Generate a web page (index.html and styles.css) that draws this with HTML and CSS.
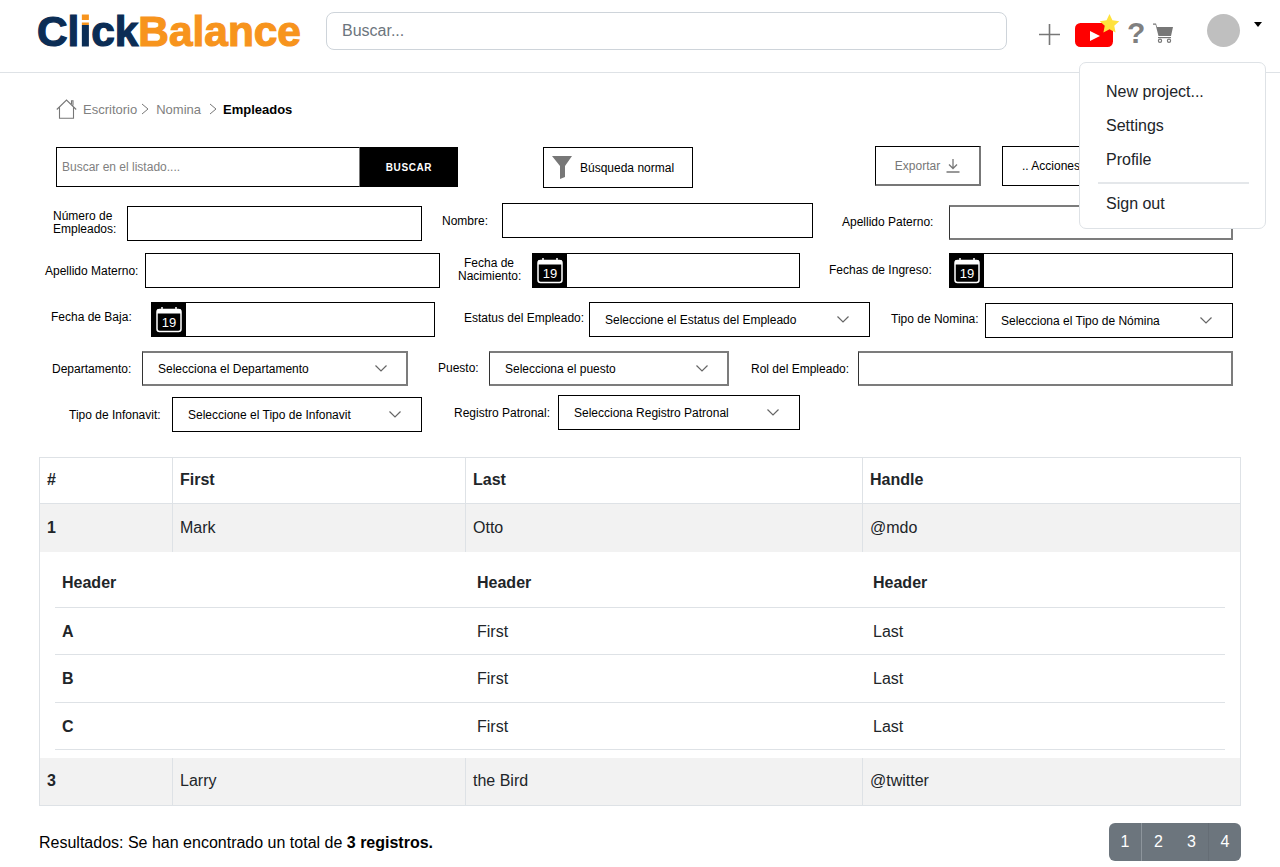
FILE: index.html
```html
<!doctype html>
<html>

<head>
	<title>ClickBalance - Empleados</title>
	<link rel="stylesheet" href="styles.css">
</head>

<body>
	<div class="top-bar">
		<div class="logo"><span class="logo-click">Cl</span><span class="logo-i">i</span><span class="logo-click">ck</span><span class="logo-balance">Balance</span></div>
		<div class="top-search">Buscar...</div>
		<div class="top-icons">
			<svg class="icon-plus" width="21" height="21" viewBox="0 0 21 21"><path d="M10.500 0v21M0 10.500h21" stroke="#777" stroke-width="1.600" fill="none"/></svg>
			<div class="yt-wrap">
				<svg width="38" height="24" viewBox="0 0 38 24"><rect width="38" height="24" rx="5.500" fill="#ff0000"/><path d="M15 8l10 5-10 5z" fill="#fff"/></svg>
				<svg class="yt-star" width="21" height="19" viewBox="0 0 22 20"><path d="M11 0l3.100 6.600 7.200.9-5.300 4.900 1.400 7.100L11 16l-6.400 3.500 1.400-7.100L.7 7.500l7.200-.9z" fill="#ffe23d"/></svg>
			</div>
			<span class="icon-help">?</span>
			<svg class="icon-cart" width="20" height="20" viewBox="0 0 20 20"><path d="M0 .5h3l1 3.500H20l-2 9H5.500L2.600 1.700H0z" fill="#777"/><rect x="5" y="14" width="13" height="1.200" fill="#777"/><circle cx="7" cy="17.800" r="1.600" fill="none" stroke="#777" stroke-width="1.200"/><circle cx="16" cy="17.800" r="1.600" fill="none" stroke="#777" stroke-width="1.200"/></svg>
			<div class="avatar"></div>
			<div class="caret"></div>
		</div>
		<div class="user-menu">
			<div class="user-menu-item">New project...</div>
			<div class="user-menu-item">Settings</div>
			<div class="user-menu-item">Profile</div>
			<div class="user-menu-line"></div>
			<div class="user-menu-item">Sign out</div>
		</div>
	</div>

	<div class="content">
		<div class="crumbs">
			<svg class="crumb-home" width="21" height="20" viewBox="0 0 21 20"><path d="M.8 10.500L10.500 1l9.700 9.500M3.500 8.500v10.800h14V8.500M15.500 5V1.800h1.500v4.700" fill="none" stroke="#777" stroke-width="1.100"/></svg>
			<span class="crumb">Escritorio</span>
			<svg class="crumb-sep" width="8" height="12" viewBox="0 0 8 12"><path d="M1 1l6 5-6 5" fill="none" stroke="#777" stroke-width="1"/></svg>
			<span class="crumb crumb-second">Nomina</span>
			<svg class="crumb-sep crumb-sep-wide" width="8" height="12" viewBox="0 0 8 12"><path d="M1 1l6 5-6 5" fill="none" stroke="#777" stroke-width="1"/></svg>
			<span class="crumb-current">Empleados</span>
		</div>

		<div class="toolbar">
			<div class="list-search">Buscar en el listado....</div>
			<div class="list-search-btn">BUSCAR</div>
			<div class="tool-box filter-box">
				<svg width="20" height="23" viewBox="0 0 20 23"><path d="M0 0h20l-7 10v11l-5 2V10z" fill="#777"/></svg>
				<span>Búsqueda normal</span>
			</div>
			<div class="tool-box export-box">
				<span>Exportar</span>
				<svg width="14" height="14" viewBox="0 0 14 14"><path d="M7 0v9M3 5.500L7 9.500l4-4M.5 13h13" fill="none" stroke="#777" stroke-width="1.300"/></svg>
			</div>
			<div class="tool-box actions-box">.. Acciones</div>
		</div>

		<div class="form-row row-1">
			<label class="lbl l-numero">Número de Empleados:</label>
			<div class="ctl c-numero"></div>
			<label class="lbl l-nombre">Nombre:</label>
			<div class="ctl c-nombre"></div>
			<label class="lbl l-paterno">Apellido Paterno:</label>
			<div class="ctl soft c-paterno"></div>
		</div>

		<div class="form-row row-2">
			<label class="lbl l-materno">Apellido Materno:</label>
			<div class="ctl c-materno"></div>
			<label class="lbl center l-nacimiento">Fecha de Nacimiento:</label>
			<div class="ctl date c-nacimiento">
				<div class="cal"><svg width="26" height="26" viewBox="0 0 26 26"><path d="M6 0v3M20 0v3" stroke="#fff" stroke-width="1.500"/><rect x="1" y="2.500" width="24" height="22" rx="2.500" fill="none" stroke="#fff" stroke-width="1.500"/><rect x="1" y="2.500" width="24" height="4" fill="#fff"/><text x="13" y="20" class="cal-num">19</text></svg></div>
			</div>
			<label class="lbl l-ingreso">Fechas de Ingreso:</label>
			<div class="ctl date c-ingreso">
				<div class="cal"><svg width="26" height="26" viewBox="0 0 26 26"><path d="M6 0v3M20 0v3" stroke="#fff" stroke-width="1.500"/><rect x="1" y="2.500" width="24" height="22" rx="2.500" fill="none" stroke="#fff" stroke-width="1.500"/><rect x="1" y="2.500" width="24" height="4" fill="#fff"/><text x="13" y="20" class="cal-num">19</text></svg></div>
			</div>
		</div>

		<div class="form-row row-3">
			<label class="lbl l-baja">Fecha de Baja:</label>
			<div class="ctl date c-baja">
				<div class="cal"><svg width="26" height="26" viewBox="0 0 26 26"><path d="M6 0v3M20 0v3" stroke="#fff" stroke-width="1.500"/><rect x="1" y="2.500" width="24" height="22" rx="2.500" fill="none" stroke="#fff" stroke-width="1.500"/><rect x="1" y="2.500" width="24" height="4" fill="#fff"/><text x="13" y="20" class="cal-num">19</text></svg></div>
			</div>
			<label class="lbl l-estatus">Estatus del Empleado:</label>
			<div class="ctl select c-estatus"><span>Seleccione el Estatus del Empleado</span><svg class="chev" width="12" height="7" viewBox="0 0 12 7"><path d="M.5.500L6 6l5.500-5.500" fill="none" stroke="#666" stroke-width="1.200"/></svg></div>
			<label class="lbl l-tipo-nomina">Tipo de Nomina:</label>
			<div class="ctl select c-tipo-nomina"><span>Selecciona el Tipo de Nómina</span><svg class="chev" width="12" height="7" viewBox="0 0 12 7"><path d="M.5.500L6 6l5.500-5.500" fill="none" stroke="#666" stroke-width="1.200"/></svg></div>
		</div>

		<div class="form-row row-4">
			<label class="lbl l-depto">Departamento:</label>
			<div class="ctl select soft c-depto"><span>Selecciona el Departamento</span><svg class="chev" width="12" height="7" viewBox="0 0 12 7"><path d="M.5.500L6 6l5.500-5.500" fill="none" stroke="#666" stroke-width="1.200"/></svg></div>
			<label class="lbl l-puesto">Puesto:</label>
			<div class="ctl select soft c-puesto"><span>Selecciona el puesto</span><svg class="chev" width="12" height="7" viewBox="0 0 12 7"><path d="M.5.500L6 6l5.500-5.500" fill="none" stroke="#666" stroke-width="1.200"/></svg></div>
			<label class="lbl l-rol">Rol del Empleado:</label>
			<div class="ctl soft c-rol"></div>
		</div>

		<div class="form-row row-5">
			<label class="lbl l-infonavit">Tipo de Infonavit:</label>
			<div class="ctl select c-infonavit"><span>Seleccione el Tipo de Infonavit</span><svg class="chev" width="12" height="7" viewBox="0 0 12 7"><path d="M.5.500L6 6l5.500-5.500" fill="none" stroke="#666" stroke-width="1.200"/></svg></div>
			<label class="lbl l-registro">Registro Patronal:</label>
			<div class="ctl select c-registro"><span>Selecciona Registro Patronal</span><svg class="chev" width="12" height="7" viewBox="0 0 12 7"><path d="M.5.500L6 6l5.500-5.500" fill="none" stroke="#666" stroke-width="1.200"/></svg></div>
		</div>

		<table class="main-table">
			<colgroup>
				<col class="col-num">
				<col class="col-first">
				<col class="col-last">
				<col>
			</colgroup>
			<tr class="head-row">
				<th>#</th>
				<th>First</th>
				<th>Last</th>
				<th>Handle</th>
			</tr>
			<tr class="grey-row">
				<th>1</th>
				<td>Mark</td>
				<td>Otto</td>
				<td>@mdo</td>
			</tr>
			<tr>
				<td colspan="4" class="nested-cell">
					<table class="nested-table">
						<colgroup>
							<col class="nested-a">
							<col class="nested-b">
							<col>
						</colgroup>
						<tr class="nested-head">
							<th>Header</th>
							<th>Header</th>
							<th>Header</th>
						</tr>
						<tr>
							<th>A</th>
							<td>First</td>
							<td>Last</td>
						</tr>
						<tr>
							<th>B</th>
							<td>First</td>
							<td>Last</td>
						</tr>
						<tr>
							<th>C</th>
							<td>First</td>
							<td>Last</td>
						</tr>
					</table>
				</td>
			</tr>
			<tr class="grey-row">
				<th>3</th>
				<td>Larry</td>
				<td>the Bird</td>
				<td>@twitter</td>
			</tr>
		</table>

		<div class="results">
			<div class="results-text">Resultados: Se han encontrado un total de <b>3 registros.</b></div>
			<div class="pager">
				<div class="page-num page-first">1</div>
				<div class="page-num">2</div>
				<div class="page-num">3</div>
				<div class="page-num page-last">4</div>
			</div>
		</div>
	</div>
</body>

</html>
```

FILE: styles.css
```css
html, body {
	margin: 0;
	padding: 0;
	height: 100%;
	overflow: hidden;
	background-color: #fff;
	color: #212529;
	font-family: 'Liberation Sans', Arial, sans-serif;
	font-size: 16px;
}

/* top bar */
.top-bar {
	position: relative;
	display: flex;
	align-items: flex-start;
	box-sizing: border-box;
	height: 73px;
	border-bottom: 1px solid #dee2e6;
}
.logo {
	margin: 9px 0 0 37px;
	width: 289px;
	height: 46px;
	font-size: 42.400px;
	line-height: 46px;
	font-weight: bold;
	white-space: nowrap;
	-webkit-text-stroke: 1.200px;
}
.logo-click {
	color: #0b2d55;
}
.logo-i {
	color: transparent;
	background: linear-gradient(#f7941d 0, #f7941d 36%, #0b2d55 36%);
	-webkit-background-clip: text;
	background-clip: text;
}
.logo-balance {
	color: #f7941d;
}
.top-search {
	box-sizing: border-box;
	margin-top: 12px;
	width: 681px;
	height: 38px;
	padding: 0 15px;
	border: 1px solid #ced4da;
	border-radius: 8px;
	line-height: 36px;
	color: #6c757d;
}
.top-icons {
	display: flex;
	align-items: flex-start;
	margin-left: 32px;
}
.icon-plus {
	margin-top: 24px;
}
.yt-wrap {
	position: relative;
	margin: 23px 0 0 15px;
	height: 24px;
}
.yt-star {
	position: absolute;
	top: -9px;
	left: 24px;
}
.icon-help {
	margin: 15px 0 0 14px;
	width: 20px;
	font-size: 30px;
	line-height: 36px;
	font-weight: bold;
	color: #808080;
}
.icon-cart {
	margin: 23px 0 0 6px;
}
.avatar {
	margin: 14px 0 0 34px;
	width: 33px;
	height: 33px;
	border-radius: 50%;
	background-color: #bfbfbf;
}
.caret {
	margin: 22px 0 0 14px;
	width: 0;
	height: 0;
	border-left: 4.500px solid transparent;
	border-right: 4.500px solid transparent;
	border-top: 5px solid #000;
}
.user-menu {
	position: absolute;
	z-index: 2;
	top: 62px;
	left: 1079px;
	box-sizing: border-box;
	width: 187px;
	height: 167px;
	padding: 12px 0;
	border: 1px solid #dee2e6;
	border-radius: 7px;
	background-color: #fff;
}
.user-menu-item {
	padding-left: 26px;
	height: 34px;
	line-height: 33px;
}
.user-menu-line {
	margin: 5px 16px 3px 18px;
	height: 2px;
	background-color: #e4e7ea;
}

/* page */
.content {
	padding: 0 39px;
}
.crumbs {
	display: flex;
	align-items: center;
	height: 20px;
	margin: 26px 0 0 17px;
	font-size: 13px;
}
.crumb-home {
	margin-right: 6px;
}
.crumb {
	color: #808080;
}
.crumb-sep {
	margin-left: 4px;
}
.crumb-second {
	margin-left: 7px;
}
.crumb-sep-wide {
	margin-left: 8px;
}
.crumb-current {
	margin-left: 6px;
	font-weight: bold;
	color: #000;
}

.toolbar {
	display: flex;
	align-items: flex-start;
	margin: 28px 0 0 17px;
	font-size: 12px;
	color: #000;
}
.list-search {
	box-sizing: border-box;
	width: 304px;
	height: 40px;
	padding-left: 5px;
	border: 1px solid #000;
	border-right-color: #777;
	line-height: 38px;
	color: #808080;
}
.list-search-btn {
	width: 98px;
	height: 40px;
	background-color: #000;
	color: #fff;
	font-size: 10px;
	font-weight: bold;
	letter-spacing: 0.600px;
	line-height: 42px;
	text-align: center;
}
.tool-box {
	display: flex;
	align-items: center;
	box-sizing: border-box;
	height: 41px;
	border: 1px solid #000;
}
.filter-box {
	margin-left: 85px;
	width: 150px;
	padding-left: 8px;
}
.filter-box span {
	margin-left: 8px;
}
.export-box {
	margin: -1px 0 0 182px;
	width: 106px;
	height: 40px;
	justify-content: center;
	gap: 6px;
	color: #777;
	border-right: 2px solid #777;
	border-bottom: 2px solid #777;
}
.actions-box {
	margin: -1px 0 0 21px;
	width: 130px;
	height: 40px;
	padding-left: 19px;
}

/* form */
.form-row {
	display: flex;
	align-items: flex-start;
	position: relative;
	height: 35px;
	margin-left: -39px;
	font-size: 12px;
	color: #000;
}
.row-1 { margin-top: 18px; }
.row-2 { margin-top: 12px; }
.row-3 { margin-top: 14px; }
.row-4 { margin-top: 14px; }
.row-5 { margin-top: 11px; }

.lbl {
	display: block;
	box-sizing: border-box;
	line-height: 13px;
	flex-shrink: 0;
}
.center {
	text-align: center;
}
.ctl {
	box-sizing: border-box;
	flex-shrink: 0;
	height: 35px;
	border: 1px solid #000;
	background-color: #fff;
}
.soft {
	border-style: solid;
	border-width: 2px 2px 2px 1px;
	border-color: #7c7c7c #7c7c7c #7c7c7c #333;
}
.date {
	display: flex;
	border-left: none;
}
.cal {
	display: flex;
	align-items: center;
	justify-content: center;
	width: 35px;
	height: 35px;
	margin-top: -1px;
	background-color: #000;
}
.cal-num {
	fill: #fff;
	font-size: 13px;
	text-anchor: middle;
	font-family: 'Liberation Sans', Arial, sans-serif;
}
.select {
	display: flex;
	align-items: center;
	justify-content: space-between;
	padding: 0 20px 0 15px;
}
.soft.select {
	padding-right: 19px;
}
.chev {
	flex-shrink: 0;
}

.l-numero { margin: 4px 0 0 53px; width: 74px; }
.c-numero { width: 295px; }
.l-nombre { margin: 9px 0 0 20px; width: 60px; }
.c-nombre { margin-top: -3px; width: 311px; }
.l-paterno { margin: 10px 0 0 29px; width: 107px; }
.c-paterno { margin-top: -1px; width: 284px; }

.l-materno { margin: 12px 0 0 45px; width: 100px; }
.c-materno { width: 295px; }
.l-nacimiento { margin: 4px 0 0 18px; width: 62px; }
.c-nacimiento { margin-left: 12px; width: 268px; }
.l-ingreso { margin: 11px 0 0 29px; width: 120px; }
.c-ingreso { width: 284px; }

.l-baja { margin: 9px 0 0 51px; width: 100px; }
.c-baja { width: 284px; }
.l-estatus { margin: 10px 0 0 29px; width: 125px; }
.c-estatus { width: 281px; }
.l-tipo-nomina { margin: 11px 0 0 21px; width: 94px; }
.c-tipo-nomina { margin-top: 1px; width: 248px; }

.l-depto { margin: 12px 0 0 52px; width: 90px; }
.c-depto { width: 266px; }
.l-puesto { margin: 11px 0 0 30px; width: 51px; }
.c-puesto { width: 240px; }
.l-rol { margin: 12px 0 0 22px; width: 107px; }
.c-rol { width: 375px; }

.l-infonavit { margin: 12px 0 0 69px; width: 103px; }
.c-infonavit { width: 250px; }
.l-registro { margin: 10px 0 0 32px; width: 104px; }
.c-registro { margin-top: -2px; width: 242px; }

/* tables */
.main-table {
	width: 1202px;
	margin-top: 25px;
	border-collapse: collapse;
	table-layout: fixed;
	border: 1px solid #dee2e6;
}
.col-num { width: 133px; }
.col-first { width: 293px; }
.col-last { width: 397px; }
.main-table th,
.main-table td {
	height: 47px;
	padding: 0 7px;
	text-align: left;
	border-left: 1px solid #dee2e6;
	box-sizing: border-box;
}
.head-row th {
	height: 46px;
	padding-bottom: 2px;
	border-bottom: 1px solid #dee2e6;
}
.grey-row th,
.grey-row td {
	height: 48px;
	background-color: #f2f2f2;
}
.main-table .nested-cell {
	height: 206px;
	padding: 0 15px 7px;
	border-left: none;
	vertical-align: top;
}
.nested-table {
	width: 100%;
	border-collapse: collapse;
	table-layout: fixed;
}
.nested-a { width: 415px; }
.nested-b { width: 396px; }
.main-table .nested-table th,
.main-table .nested-table td {
	height: 47.300px;
	padding-top: 2px;
	border-left: none;
	border-bottom: 1px solid #dee2e6;
}
.main-table .nested-table .nested-head th {
	height: 56px;
	padding-top: 8px;
}

.results {
	display: flex;
	justify-content: space-between;
	align-items: center;
	width: 1202px;
	margin-top: 17px;
	color: #000;
}
.results-text {
	padding-top: 1px;
}
.pager {
	display: flex;
	height: 38px;
	border-radius: 6px;
	overflow: hidden;
	background-color: #6c757d;
	color: #fff;
}
.page-num {
	box-sizing: border-box;
	width: 33px;
	line-height: 38px;
	text-align: center;
}
.page-first {
	border-right: 1px solid #8d959c;
}
.page-last {
	border-left: 1px solid #656d75;
}
```
